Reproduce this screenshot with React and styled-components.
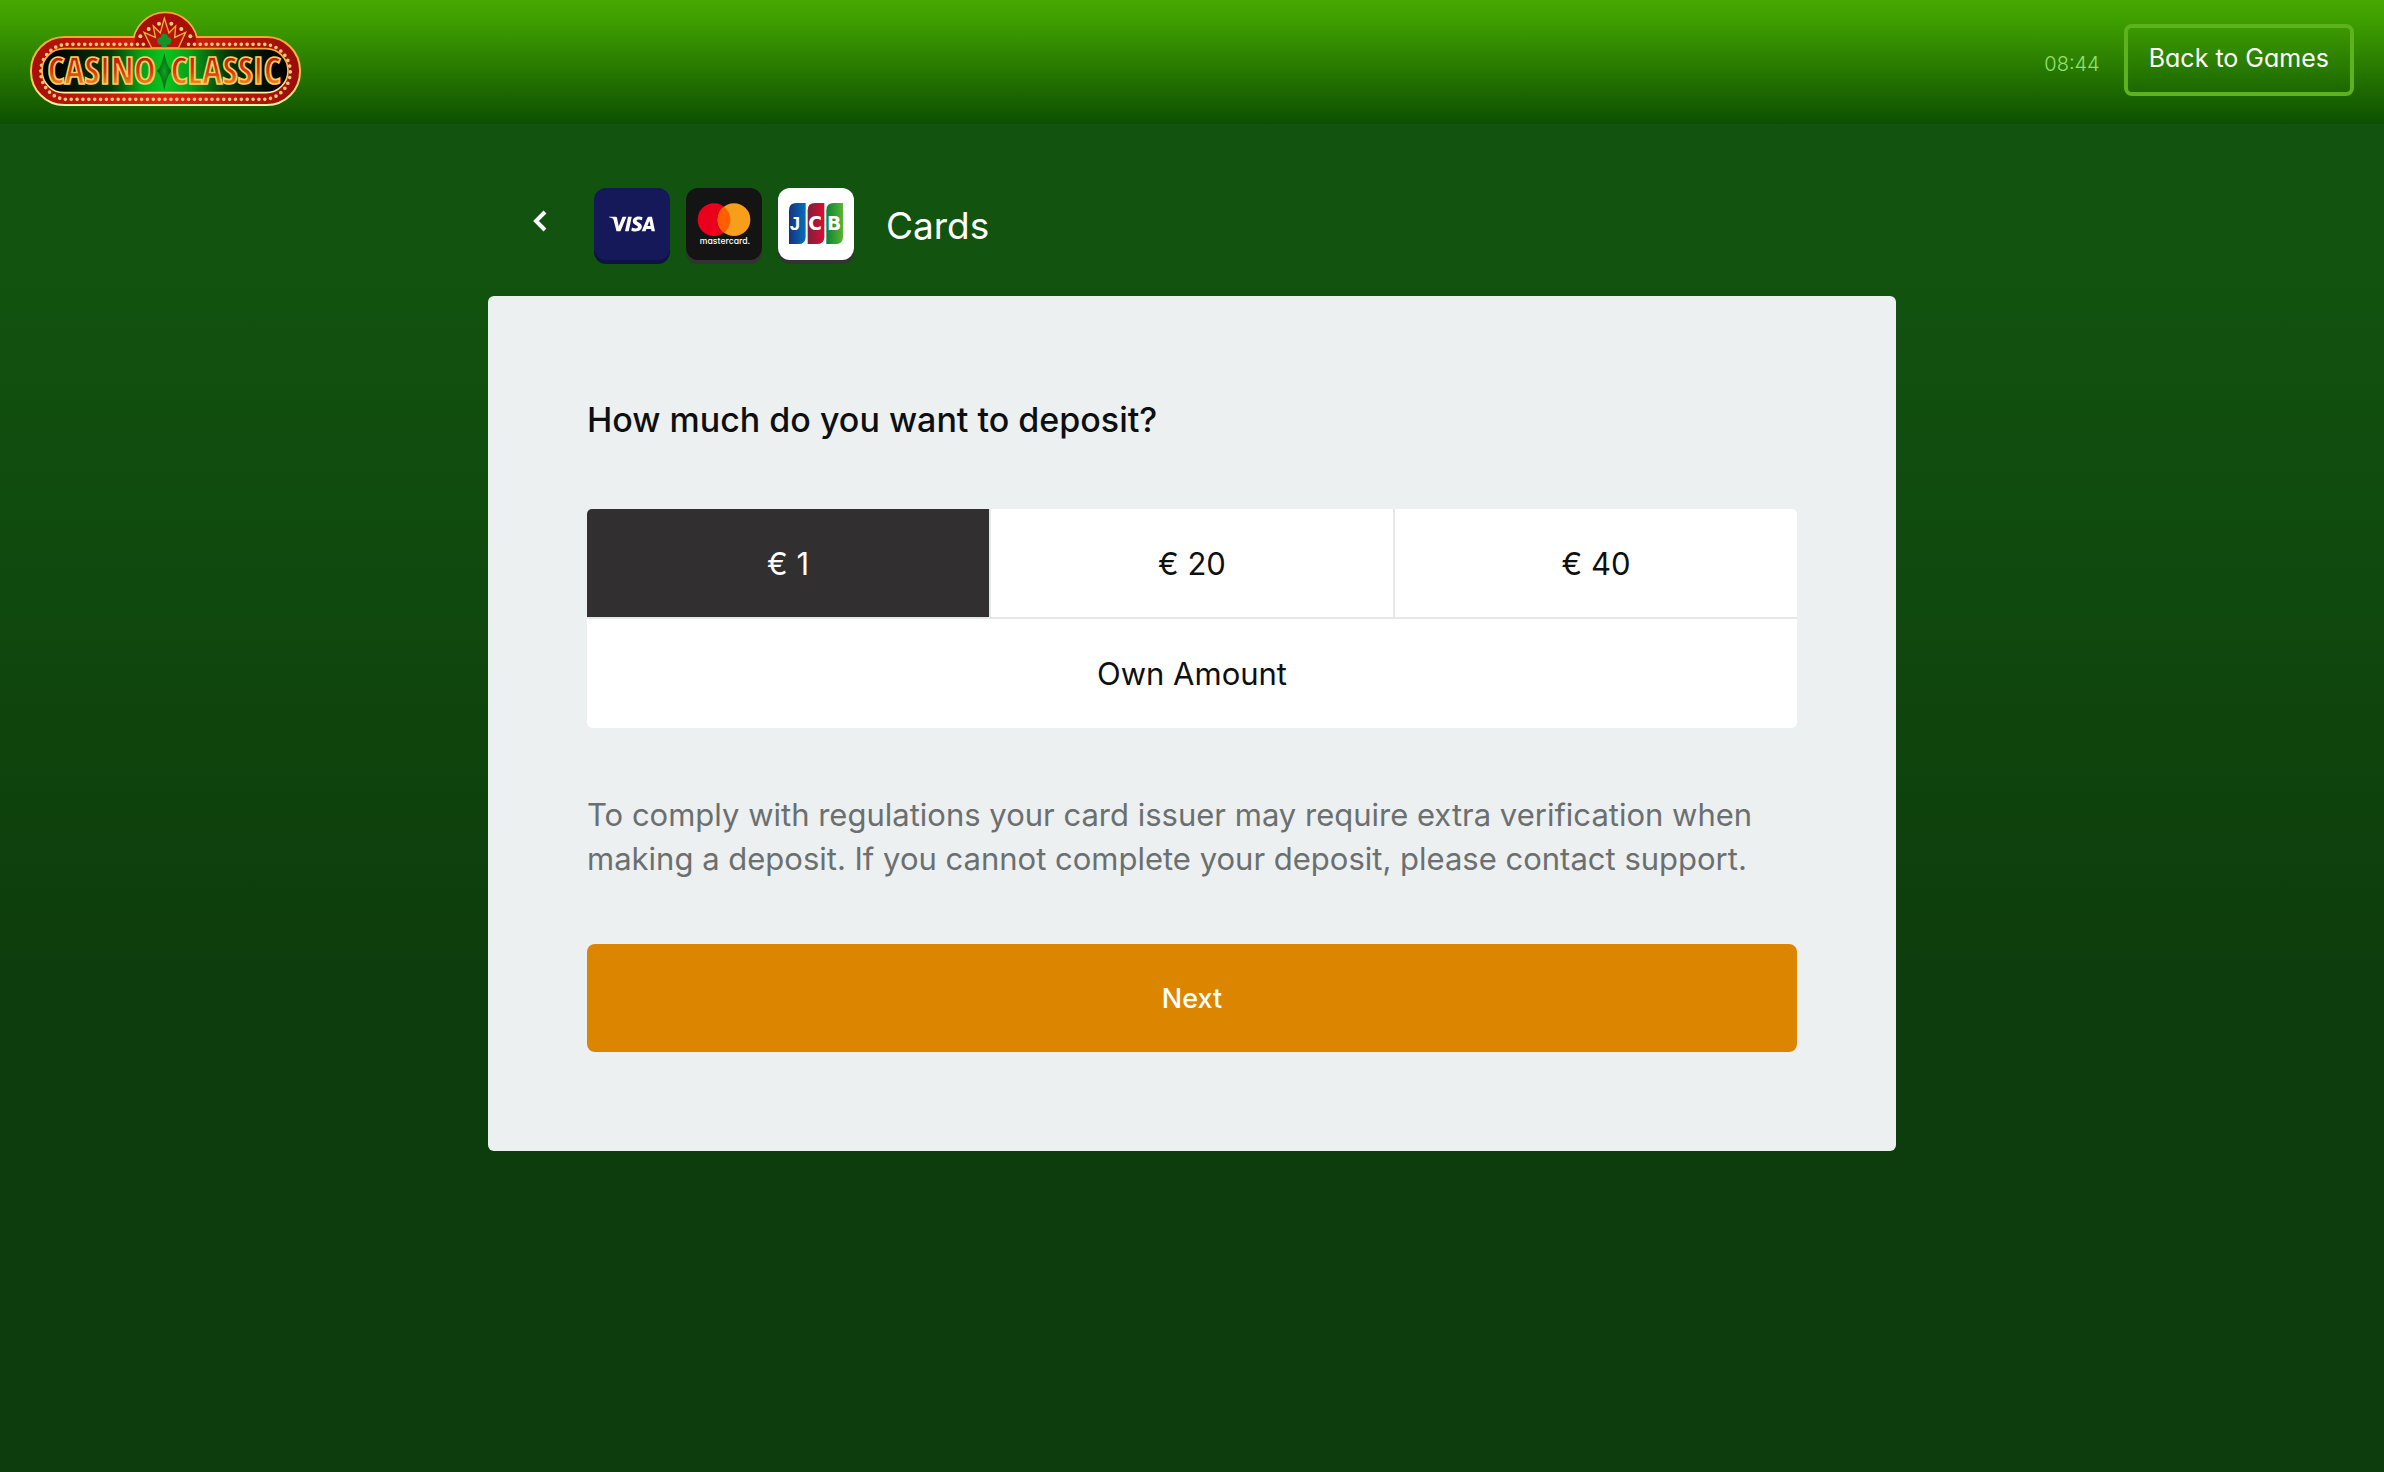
import React, { useState } from "react"
import styled, { createGlobalStyle } from "styled-components"
import { SiVisa } from "react-icons/si"

const GlobalStyle = createGlobalStyle`
  * {
    box-sizing: border-box;
  }

  body {
    margin: 0;
    font-family: "Inter", "Liberation Sans", sans-serif;
    color: #0d0f10;
    background: #0d3d0c;
  }

  button {
    font-family: inherit;
    border: none;
    cursor: pointer;
  }
`

const Page = styled.div`
  min-height: 100vh;
  background: linear-gradient(#12550f 0%, #12530f 18%, #0d3d0c 66%, #0d3d0c 100%);
`

const Header = styled.header`
  display: flex;
  align-items: center;
  justify-content: space-between;
  height: 124px;
  padding: 0 30px 4px;
  background: linear-gradient(#47a802 0%, #3f9f00 16%, #0d5000 100%);
`

const LogoLink = styled.a`
  display: flex;
`

const HeaderActions = styled.div`
  display: flex;
  align-items: center;
  gap: 24px;
  font-feature-settings: "cv11";
`

const Clock = styled.time`
  font-size: 20px;
  font-weight: 300;
  line-height: 28px;
  padding-top: 8px;
  color: #98e070;
`

const BackToGames = styled.button`
  height: 72px;
  padding: 0 21px 4px;
  border: 4px solid #5cb31e;
  border-radius: 8px;
  background: transparent;
  color: #fff;
  font-size: 25px;
  font-feature-settings: inherit;
`

const Main = styled.main`
  width: 100%;
  max-width: 1408px;
  margin: 0 auto;
`

const TitleRow = styled.div`
  display: flex;
  align-items: center;
  padding: 64px 44px 32px;
`

const BackButton = styled.button`
  display: flex;
  padding: 0 0 8px;
  margin-right: 46px;
  background: none;
`

const CardTypes = styled.div`
  display: flex;
  gap: 16px;
  margin-right: 32px;
  padding-bottom: 4px;
`

const CardTile = styled.span`
  display: flex;
  align-items: center;
  justify-content: center;
  width: 76px;
  height: 72px;
  border-radius: 12px;
  color: #fff;
  background: ${(props) => props.$color};
  box-shadow: 0 4px 0 ${(props) => props.$edge};
`

const Title = styled.h1`
  margin: 0;
  font-size: 37px;
  font-weight: 400;
  line-height: 48px;
  color: #fff;
`

const Panel = styled.section`
  padding: 99px;
  border-radius: 6px;
  background: #ecf0f1;
`

const Question = styled.h2`
  margin: 0 0 64px;
  font-size: 34px;
  font-weight: 500;
  line-height: 50px;
`

const AmountGrid = styled.div`
  display: grid;
  grid-template-columns: repeat(3, 1fr);
  grid-template-rows: 108px 109px;
  gap: 2px;
  border-radius: 5px;
  overflow: hidden;
  background: #e4e8e9;
`

const AmountButton = styled.button`
  grid-column: ${(props) => (props.$wide ? "1 / -1" : "auto")};
  background: ${(props) => (props.$active ? "#312f30" : "#fff")};
  color: ${(props) => (props.$active ? "#fff" : "#0d0f10")};
  font-size: 31px;
`

const Notice = styled.p`
  margin: 65px 0 63px;
  font-size: 31px;
  line-height: 44px;
  color: #6b6f70;
`

const NextButton = styled.button`
  display: block;
  width: 100%;
  height: 108px;
  border-radius: 8px;
  background: #dc8500;
  color: #fff;
  font-size: 27px;
  font-weight: 500;
`

const domeBulbs = [
  [391, 109],
  [416, 87],
  [447, 71],
  [484, 71],
  [514, 87],
  [541, 109],
]

function CasinoLogo() {
  return (
    <svg width="272" height="98" viewBox="60 33 816 294" role="img" aria-label="Casino Classic">
      <defs>
        <linearGradient id="rim" x1="0" y1="0" x2="0" y2="1">
          <stop offset="0" stopColor="#f2a832" />
          <stop offset="0.6" stopColor="#f5c752" />
          <stop offset="1" stopColor="#fff3a8" />
        </linearGradient>
        <linearGradient id="red" x1="0" y1="0" x2="1" y2="0">
          <stop offset="0" stopColor="#a80f08" />
          <stop offset="0.5" stopColor="#d82810" />
          <stop offset="1" stopColor="#980d0a" />
        </linearGradient>
        <linearGradient id="felt" x1="0" y1="0" x2="1" y2="0">
          <stop offset="0.05" stopColor="#000" />
          <stop offset="0.28" stopColor="#063a08" />
          <stop offset="0.4" stopColor="#08a018" />
          <stop offset="0.5" stopColor="#0cc420" />
          <stop offset="0.6" stopColor="#08a018" />
          <stop offset="0.75" stopColor="#063a08" />
          <stop offset="0.95" stopColor="#000" />
        </linearGradient>
        <linearGradient id="letters" x1="0" y1="0" x2="0" y2="1">
          <stop offset="0.2" stopColor="#c01408" />
          <stop offset="0.55" stopColor="#dc340c" />
          <stop offset="0.85" stopColor="#f8a020" />
        </linearGradient>
        <radialGradient id="gem">
          <stop offset="0" stopColor="#12a424" />
          <stop offset="1" stopColor="#045c10" />
        </radialGradient>
      </defs>

      <circle cx="466" cy="134" r="97" fill="#a80f08" stroke="url(#rim)" strokeWidth="5" />
      <rect x="63" y="111" width="807" height="204" rx="100" fill="url(#red)" stroke="url(#rim)" strokeWidth="6" />
      <path d="M374 114a95 95 0 0 1 184 0v28H374z" fill="#a80f08" />
      <path
        d="M425 144 402 97l34 15-6-34 21 21 12-44 14 44 20-21-3 34 33-15-22 47z"
        fill="#b8140c"
        stroke="#f0b040"
        strokeWidth="4"
      />
      {domeBulbs.map(([cx, cy]) => (
        <circle key={cx} cx={cx} cy={cy} r="6" fill="#fbd27a" />
      ))}
      <g fill="#12952a">
        <circle cx="463" cy="111" r="10" />
        <circle cx="453" cy="123" r="11" />
        <circle cx="473" cy="123" r="11" />
        <path d="M460 118h6l6 24h-18z" />
      </g>

      <path
        d="M400 133H166a83 83 0 0 0 0 165h601a83 83 0 0 0 0-165H532"
        fill="none"
        stroke="#fbc878"
        strokeWidth="11"
        strokeLinecap="round"
        strokeDasharray="0 17.6"
      />
      <rect x="96" y="146" width="738" height="132" rx="66" fill="url(#felt)" stroke="url(#rim)" strokeWidth="5" />
      <path d="M463 158q8 42 22 55-14 13-22 56-8-43-22-56 14-13 22-55z" fill="url(#gem)" />

      <g
        fontFamily="'Liberation Sans Narrow', 'Open Sans Condensed', 'Liberation Sans', sans-serif"
        fontWeight="700"
        fontSize="111"
        textAnchor="middle"
        fill="url(#letters)"
        stroke="#fbd060"
        strokeWidth="5"
      >
        <text x="275" y="252">CASINO</text>
        <text x="647" y="252">CLASSIC</text>
      </g>
    </svg>
  )
}

function ChevronLeft() {
  return (
    <svg width="16" height="24" viewBox="0 0 16 24" fill="none" stroke="#fff" strokeWidth="4">
      <path d="M13 2 4 11l9 9" />
    </svg>
  )
}

function MastercardLogo() {
  return (
    <svg width="76" height="72" viewBox="0 0 228 216" role="img" aria-label="Mastercard">
      <circle cx="84" cy="95" r="49" fill="#eb001b" />
      <circle cx="144" cy="95" r="49" fill="#f79e1b" />
      <path d="M114 56a49 49 0 0 1 0 78 49 49 0 0 1 0-78z" fill="#ff5f00" />
      <text
        x="117"
        y="168"
        fontFamily="Inter, sans-serif"
        fontSize="26"
        fontWeight="500"
        fill="#fff"
        textAnchor="middle"
        style={{ fontFeatureSettings: '"cv11"' }}
      >
        mastercard.
      </text>
    </svg>
  )
}

const jcbBars = [
  { letter: "J", x: 33, textX: 51, font: "Liberation Sans", from: "#1c2f7c", to: "#0073bc" },
  { letter: "C", x: 89, textX: 111, font: "DejaVu Sans", from: "#7c1f3a", to: "#dc0d33" },
  { letter: "B", x: 145, textX: 168, font: "DejaVu Sans", from: "#0a8437", to: "#5cb432" },
]

function JcbLogo() {
  return (
    <svg width="76" height="72" viewBox="0 0 228 216" role="img" aria-label="JCB">
      {jcbBars.map(({ letter, x, textX, font, from, to }) => (
        <g key={letter}>
          <linearGradient id={`jcb-${letter}`}>
            <stop offset="0" stopColor={from} />
            <stop offset="1" stopColor={to} />
          </linearGradient>
          <path
            d={`M${x} 67q0-22 22-22h28v101q0 22-22 22H${x}z`}
            fill={`url(#jcb-${letter})`}
          />
          <text
            x={textX}
            y="127"
            fontFamily={`${font}, sans-serif`}
            fontSize="56"
            fontWeight="700"
            fill="#fff"
            textAnchor="middle"
          >
            {letter}
          </text>
        </g>
      ))}
    </svg>
  )
}

const amounts = ["€ 1", "€ 20", "€ 40"]

export default function App() {
  const [selected, setSelected] = useState("€ 1")

  return (
    <Page>
      <GlobalStyle />
      <Header>
        <LogoLink href="#">
          <CasinoLogo />
        </LogoLink>
        <HeaderActions>
          <Clock>08:44</Clock>
          <BackToGames>Back to Games</BackToGames>
        </HeaderActions>
      </Header>
      <Main>
        <TitleRow>
          <BackButton aria-label="Back">
            <ChevronLeft />
          </BackButton>
          <CardTypes>
            <CardTile $color="#15195a" $edge="#0d1440">
              <SiVisa size={46} title="Visa" />
            </CardTile>
            <CardTile $color="#141414" $edge="#333">
              <MastercardLogo />
            </CardTile>
            <CardTile $color="#fff" $edge="#333">
              <JcbLogo />
            </CardTile>
          </CardTypes>
          <Title>Cards</Title>
        </TitleRow>
        <Panel>
          <Question>How much do you want to deposit?</Question>
          <AmountGrid role="group" aria-label="Deposit amount">
            {amounts.map((amount) => (
              <AmountButton
                key={amount}
                $active={selected === amount}
                aria-pressed={selected === amount}
                onClick={() => setSelected(amount)}
              >
                {amount}
              </AmountButton>
            ))}
            <AmountButton
              $wide
              $active={selected === "own"}
              aria-pressed={selected === "own"}
              onClick={() => setSelected("own")}
            >
              Own Amount
            </AmountButton>
          </AmountGrid>
          <Notice>
            To comply with regulations your card issuer may require extra verification when making a
            deposit. If you cannot complete your deposit, please contact support.
          </Notice>
          <NextButton>Next</NextButton>
        </Panel>
      </Main>
    </Page>
  )
}
